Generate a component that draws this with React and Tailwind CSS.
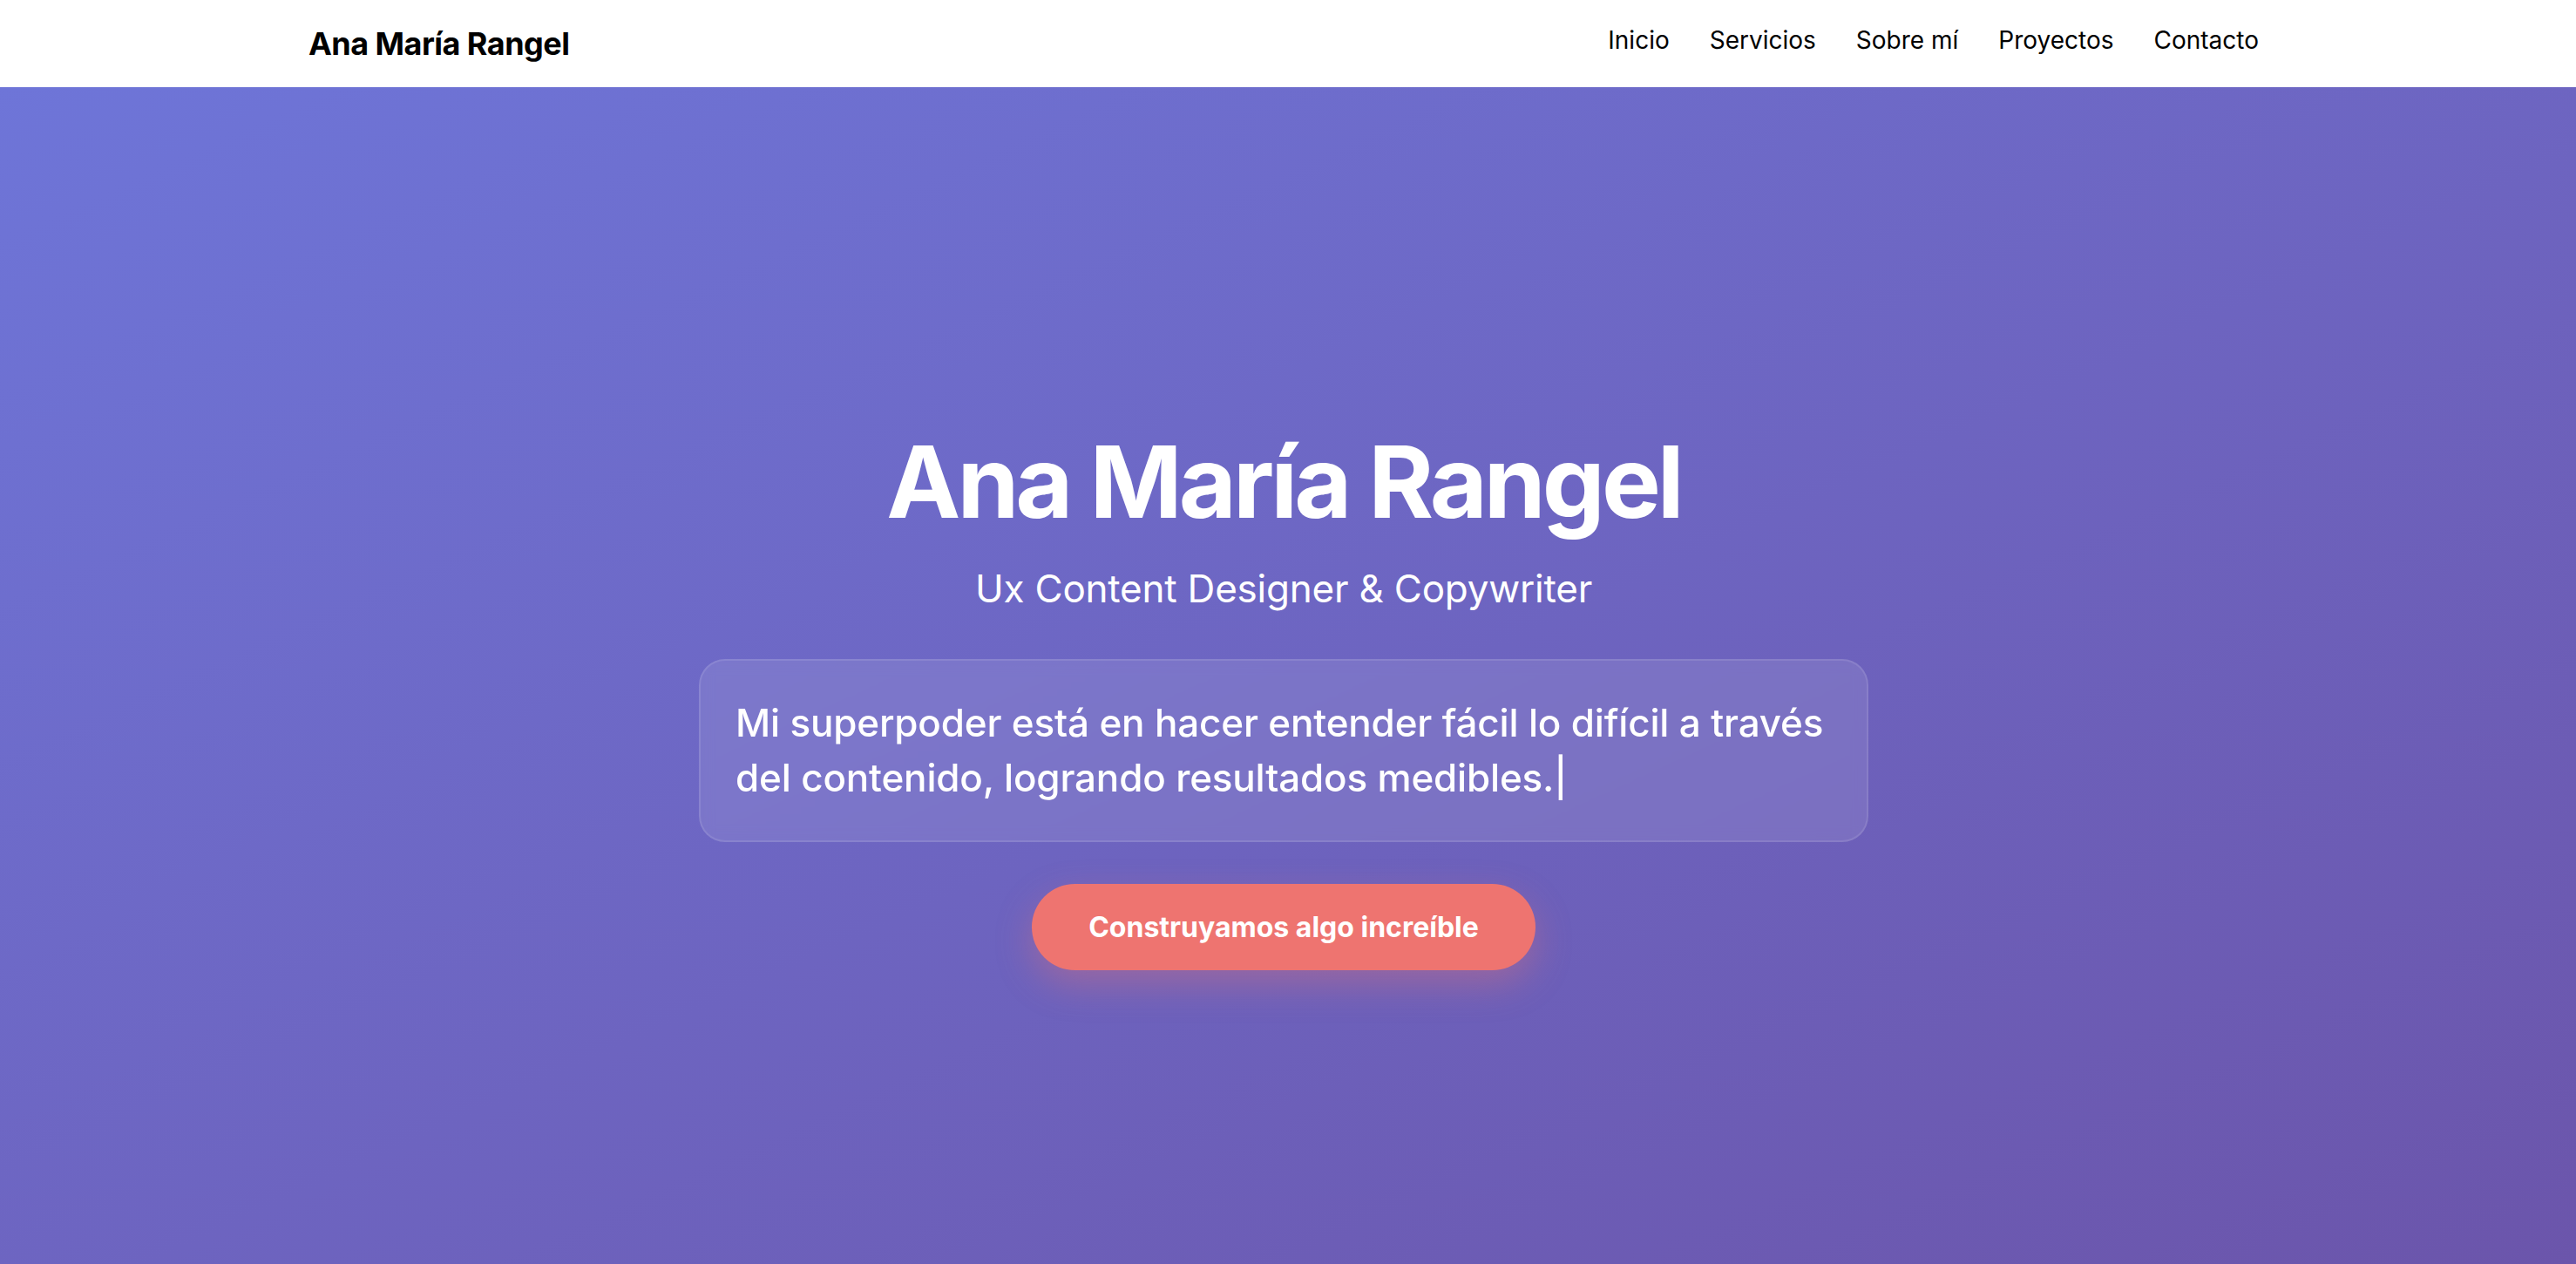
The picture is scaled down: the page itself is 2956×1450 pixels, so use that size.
import React from 'react';

const links = ['Inicio', 'Servicios', 'Sobre mí', 'Proyectos', 'Contacto'];

const App = () => {
  return (
    <div className="min-h-screen font-['Inter','Liberation_Sans',sans-serif] antialiased">
      <header className="bg-white">
        <nav className="mx-auto flex h-[100px] max-w-[2400px] items-center justify-between pl-[76px] pr-[86px]">
          <a className="text-[36px] font-bold tracking-[-0.015em] text-black">Ana María Rangel</a>
          <ul className="flex items-center gap-[46px] pb-[8px]">
            {links.map((link) => (
              <li key={link} className="text-[28px] text-black">
                {link}
              </li>
            ))}
          </ul>
        </nav>
      </header>

      <section className="flex min-h-[1350px] flex-col items-center bg-gradient-to-br from-[#6e75d8] to-[#6b55ab] pr-[10px] pt-[390px] text-center text-white">
        <h1 className="text-[114px] font-bold leading-[126px] tracking-[-0.035em]">Ana María Rangel</h1>
        <p className="mt-[32px] text-[44px] leading-[55px] tracking-[-0.005em]">Ux Content Designer &amp; Copywriter</p>

        <div className="mt-[53px] w-[1342px] rounded-[30px] border-2 border-white/10 bg-white/10 px-[40px] py-[40px] text-left backdrop-blur-sm">
          <p className="text-[44px] font-medium leading-[63px] tracking-[-0.004em]">
            Mi superpoder está en hacer entender fácil lo difícil a través del contenido, logrando resultados medibles.|
          </p>
        </div>

        <button className="mt-[48px] flex h-[99px] items-center rounded-full bg-[#ee7470] px-[65px] text-[32px] font-bold text-white shadow-[0_16px_40px_rgba(238,116,112,0.35)]">
          Construyamos algo increíble
        </button>
      </section>
    </div>
  );
};

export default App;
